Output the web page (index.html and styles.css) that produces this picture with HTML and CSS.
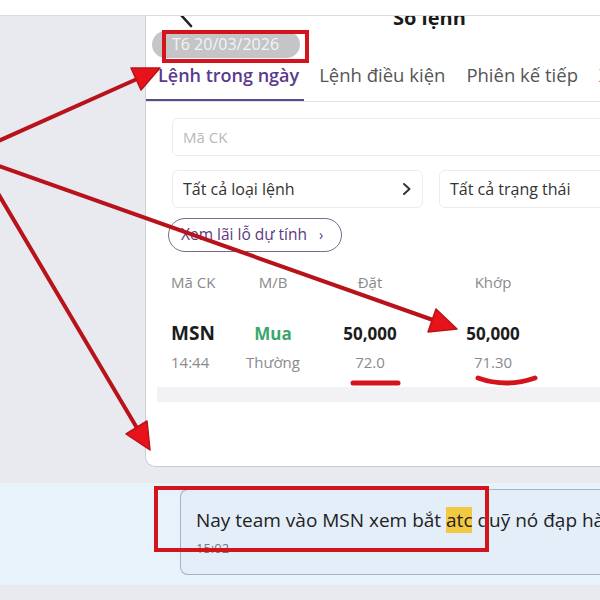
FILE: index.html
```html
<!DOCTYPE html>
<html lang="vi">
<head>
    <meta charset="UTF-8">
    <meta name="viewport" content="width=device-width, initial-scale=1.0">
    <title>Sổ lệnh</title>
    <link rel="stylesheet" href="styles.css">
</head>
<body>

    <div class="topbar"></div>

    <div class="main">
        <div class="side"></div>
        <div class="panel">
            <div class="panel-head">
                <svg class="back" width="16" height="26" viewBox="0 0 16 26">
                    <polyline points="13,2 3,13 13,24" fill="none" stroke="#222" stroke-width="2.6" stroke-linecap="round" stroke-linejoin="round"/>
                </svg>
                <h1 class="title">Sổ lệnh</h1>
            </div>

            <div class="date-pill">T6 20/03/2026</div>

            <div class="tabs">
                <div class="tab active">Lệnh trong ngày</div>
                <div class="tab">Lệnh điều kiện</div>
                <div class="tab">Phiên kế tiếp</div>
                <div class="tab">Xử lý</div>
            </div>

            <div class="filters">
                <div class="field placeholder">Mã CK</div>
                <div class="select-row">
                    <div class="field select">
                        <span>Tất cả loại lệnh</span>
                        <svg width="10" height="14" viewBox="0 0 10 14">
                            <polyline points="2,2 7.5,7 2,12" fill="none" stroke="#333" stroke-width="2" stroke-linecap="round" stroke-linejoin="round"/>
                        </svg>
                    </div>
                    <div class="field select wide">
                        <span>Tất cả trạng thái</span>
                    </div>
                </div>
                <div class="pnl-btn">Xem lãi lỗ dự tính <span class="pnl-arrow">›</span></div>
            </div>

            <div class="orders">
                <div class="orders-head">
                    <div>Mã CK</div>
                    <div class="center">M/B</div>
                    <div class="center">Đặt</div>
                    <div class="center">Khớp</div>
                </div>
                <div class="order-row">
                    <div class="symbol">MSN</div>
                    <div class="center buy">Mua</div>
                    <div class="center strong">50,000</div>
                    <div class="center strong">50,000</div>
                    <div class="sub">14:44</div>
                    <div class="center sub">Thường</div>
                    <div class="center sub">72.0</div>
                    <div class="center sub">71.30</div>
                </div>
            </div>
            <div class="band"></div>
        </div>
    </div>

    <div class="chat">
        <div class="bubble">
            <div class="msg">Nay team vào MSN xem bắt <span class="hl">atc</span> quỹ nó đạp hàng lên giá</div>
            <div class="time">15:02</div>
        </div>
    </div>

    <!-- annotation marks drawn over the screenshot -->
    <svg class="marks" width="600" height="600" viewBox="0 0 600 600">
        <g fill="none" stroke="#d3141d" stroke-width="4">
            <rect x="164" y="32" width="143" height="29"/>
            <rect x="156" y="488" width="331" height="62"/>
        </g>
        <g stroke="#b8121b" stroke-width="4" stroke-linecap="round">
            <line x1="-4" y1="142" x2="137" y2="79"/>
            <line x1="-4" y1="165" x2="433" y2="320"/>
            <line x1="-4" y1="190" x2="137" y2="428"/>
        </g>
        <g fill="#e8121a" stroke="#b8121b" stroke-width="1.5" stroke-linejoin="round">
            <polygon points="160,68 141,90 131,68"/>
            <polygon points="457,329 428,332 436,309"/>
            <polygon points="150,450 126,434 147,421"/>
        </g>
        <g fill="none" stroke="#d3141d" stroke-width="5" stroke-linecap="round">
            <path d="M353,383 L398,383"/>
            <path d="M478,378 Q506,388 535,378"/>
        </g>
    </svg>

</body>
</html>
```

FILE: styles.css
```css
body {
    font-family: 'Open Sans', 'Noto Sans', sans-serif;
    background-color: #e9eaef;
    margin: 0;
    width: 600px;
    height: 600px;
    overflow: hidden;
    position: relative;
}

.topbar {
    height: 15px;
    background-color: #ffffff;
    border-bottom: 1px solid #dcdde2;
}

.main {
    display: flex;
    height: 451px;
}

.side {
    width: 145px;
    flex-shrink: 0;
}

.panel {
    flex: 1;
    background-color: #ffffff;
    border-left: 1px solid #cfd0d5;
    border-bottom: 1px solid #c9cacf;
    border-bottom-left-radius: 10px;
    overflow: hidden;
}

.panel-head {
    height: 15px;
    display: flex;
    align-items: flex-end;
}

.back {
    margin-left: 32px;
    margin-bottom: 3px;
    flex-shrink: 0;
}

.title {
    margin: 0 0 2px 199px;
    font-size: 20px;
    font-weight: 700;
    line-height: 22px;
    color: #1a1a1a;
    white-space: nowrap;
}

.date-pill {
    margin: 0 0 0 6px;
    width: 128px;
    height: 27px;
    padding-left: 20px;
    line-height: 27px;
    background-color: #c5c5c7;
    color: #f4f4f4;
    font-size: 16px;
    border-radius: 14px;
}

.tabs {
    display: flex;
    height: 43px;
    border-bottom: 1px solid #e2e2e6;
    white-space: nowrap;
}

.tab {
    font-size: 18.5px;
    line-height: 34px;
    color: #555;
    padding: 0 6px 0 15px;
}

.tab.active {
    font-size: 18px;
    color: #5a3a8d;
    font-weight: 600;
    padding: 0 5px 0 12px;
    border-bottom: 2px solid #5b4a8c;
}

.filters {
    padding: 16px 0 0 26px;
    display: flex;
    flex-direction: column;
    gap: 14px;
}

.field {
    height: 36px;
    border: 1px solid #ececef;
    border-radius: 6px;
    padding: 0 10px;
    display: flex;
    align-items: center;
    font-size: 15px;
    color: #333;
    margin-right: -20px;
}

.field.placeholder {
    color: #b8b8bc;
}

.select-row {
    display: flex;
    gap: 16px;
}

.select {
    width: 229px;
    flex-shrink: 0;
    justify-content: space-between;
    margin-right: 0;
    font-size: 16px;
}

.select.wide {
    width: 200px;
}

.pnl-btn {
    align-self: flex-start;
    margin: -4px 0 0 -4px;
    height: 32px;
    line-height: 31px;
    padding: 0 18px 0 12px;
    border: 1.5px solid #7b6a8c;
    border-radius: 17px;
    color: #5a3a80;
    font-size: 15.5px;
}

.pnl-arrow {
    font-size: 14px;
    margin-left: 8px;
}

.orders {
    padding-left: 25px;
    margin-top: 16px;
}

.orders-head,
.order-row {
    display: grid;
    grid-template-columns: 62px 80px 114px 132px;
}

.orders-head {
    height: 28px;
    line-height: 28px;
    font-size: 15px;
    color: #8a8a8e;
}

.order-row {
    padding: 22px 0 11px;
    grid-template-rows: 30px 28px;
    align-items: center;
}

.center {
    text-align: center;
}

.symbol {
    font-size: 19px;
    font-weight: 700;
    color: #1c1c1c;
}

.buy {
    font-size: 17px;
    font-weight: 700;
    color: #3aa76d;
}

.strong {
    font-size: 17px;
    font-weight: 700;
    color: #1c1c1c;
}

.sub {
    font-size: 15px;
    color: #8a8a8e;
}

.band {
    margin-left: 11px;
    height: 15px;
    background-color: #f2f2f4;
}

.chat {
    margin-top: 16px;
    height: 88px;
    padding: 6px 0 8px 180px;
    background-color: #e7f2fb;
}

.bubble {
    height: 86px;
    background-color: #e3eef9;
    border: 1px solid #9fb2c6;
    border-right: none;
    border-radius: 8px 0 0 8px;
    padding: 17px 0 0 15px;
    box-sizing: border-box;
    white-space: nowrap;
    overflow: hidden;
}

.msg {
    font-size: 19px;
    line-height: 26px;
    color: #222;
}

.hl {
    background-color: #f3c943;
}

.time {
    margin-top: 7px;
    font-size: 13px;
    line-height: 16px;
    color: #7a7a7e;
}

.marks {
    position: absolute;
    top: 0;
    left: 0;
    pointer-events: none;
}
```
